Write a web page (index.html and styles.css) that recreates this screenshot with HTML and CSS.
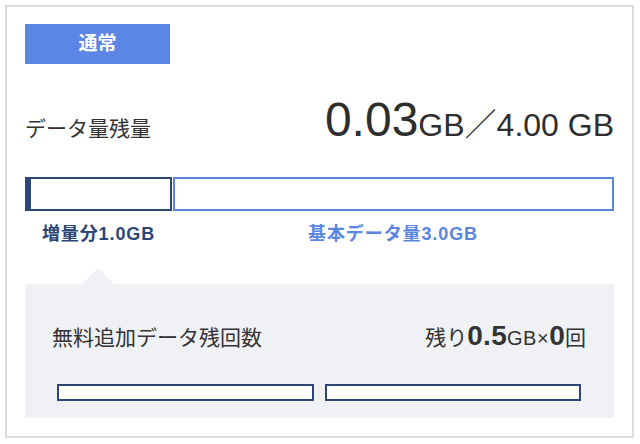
FILE: index.html
```html
<!DOCTYPE html>
<html lang="ja">
<head>
<meta charset="utf-8">
<link rel="stylesheet" href="styles.css">
</head>
<body>
<div class="card">
  <div class="badge">通常</div>
  <div class="head">
    <div class="title">データ量残量</div>
    <div class="amount"><span class="big">0.03</span><span class="unit">GB</span><span class="slash">／</span><span class="unit">4.00 GB</span></div>
  </div>
  <div class="bar">
    <div class="seg seg-extra"><div class="fill" style="width:4px"></div></div>
    <div class="seg seg-base"></div>
  </div>
  <div class="labels">
    <div class="label label-extra">増量分1.0GB</div>
    <div class="label label-base">基本データ量3.0GB</div>
  </div>
  <div class="panel">
    <div class="panel-row">
      <div class="panel-title">無料追加データ残回数</div>
      <div class="panel-value"><span class="pv-jp">残り</span><span class="pv-num">0.5</span><span class="pv-unit">GB×</span><span class="pv-num">0</span><span class="pv-jp">回</span></div>
    </div>
    <div class="slots">
      <div class="slot"></div>
      <div class="slot"></div>
    </div>
  </div>
</div>
</body>
</html>
```

FILE: styles.css
```css
* { box-sizing: border-box; }
html, body { margin: 0; padding: 0; background: #fff; }
body {
  font-family: "Liberation Sans", "Noto Sans CJK JP", sans-serif;
  color: #333;
}
.card {
  margin: 5px 6px 0 5px;
  height: 433px;
  border: 2px solid #dcdcdc;
  padding: 17px 18px 0 18px;
  background: #fff;
}
.badge {
  width: 145px;
  height: 40px;
  background: #5b86e6;
  color: #fff;
  font-weight: bold;
  font-size: 19px;
  line-height: 40px;
  text-align: center;
}
.head {
  display: flex;
  justify-content: space-between;
  align-items: baseline;
  height: 113px;
  padding-top: 32px;
}
.title {
  font-size: 21px;
  color: #333;
}
.amount {
  color: #2e2e2e;
  line-height: 1;
}
.big { font-size: 48px; }
.unit { font-size: 32px; }
.slash { font-size: 32px; font-family: "Noto Sans CJK JP", sans-serif; font-weight: 300; }
.bar {
  display: flex;
  height: 34px;
}
.seg { height: 34px; background: #fff; }
.seg-extra {
  width: 147px;
  border: 2px solid #2c4678;
}
.fill {
  height: 100%;
  background: #2c4678;
}
.seg-base {
  flex: 1;
  margin-left: 1px;
  border: 2px solid #5b86e0;
}
.labels {
  display: flex;
  font-weight: bold;
  font-size: 18px;
  letter-spacing: 0.9px;
  height: 73px;
  padding-top: 13px;
}
.label { text-align: center; line-height: 20px; }
.label-extra { width: 147px; color: #2c4678; }
.label-base { flex: 1; color: #5b86e0; }
.panel {
  position: relative;
  background: #eff1f4;
  height: 134px;
  padding: 0 28px 0 27px;
}
.panel::before {
  content: "";
  position: absolute;
  left: 57px;
  top: -16px;
  border-left: 16px solid transparent;
  border-right: 16px solid transparent;
  border-bottom: 16px solid #eff1f4;
}
.panel-row {
  display: flex;
  justify-content: space-between;
  align-items: baseline;
  height: 100px;
  padding-top: 36px;
}
.panel-title { font-size: 21px; color: #333; }
.panel-value { color: #333; }
.pv-jp { font-size: 21px; }
.pv-num { font-size: 28px; font-weight: bold; letter-spacing: 0.3px; }
.pv-unit { font-size: 20px; letter-spacing: 0.5px; }
.slots {
  display: flex;
  gap: 11px;
  padding: 0 5px;
}
.slot {
  flex: 1;
  height: 17px;
  border: 2px solid #2c4678;
  background: #fff;
}
```
